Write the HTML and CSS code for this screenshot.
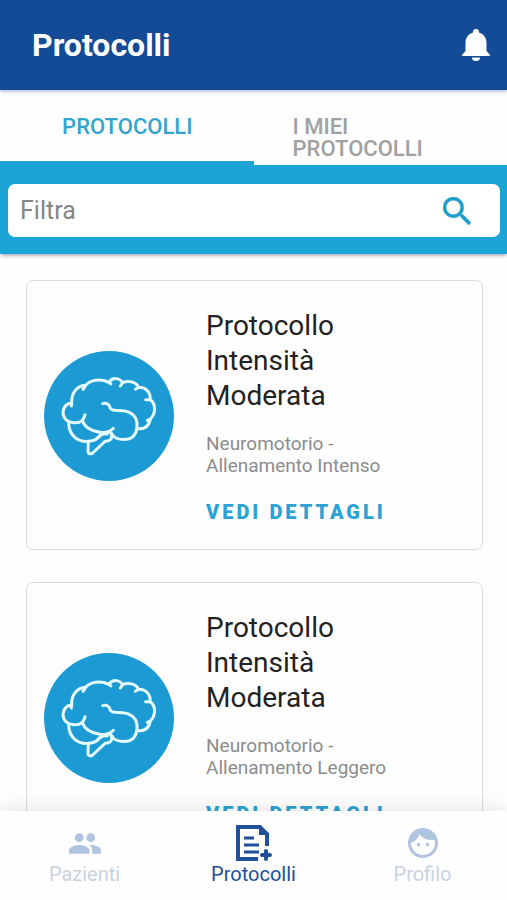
FILE: index.html
```html
<!DOCTYPE html>
<html lang="it">
<head>
  <meta charset="utf-8">
  <meta name="viewport" content="width=device-width, initial-scale=1">
  <title>Protocolli</title>
  <link rel="stylesheet" href="styles.css">
</head>
<body>
  <!-- Shared brain drawing used by the cards -->
  <svg class="sprite" aria-hidden="true">
    <symbol id="brain" viewBox="41 32 390 390">
      <circle cx="236" cy="227" r="195" fill="#1b9ad3"/>
      <g fill="none" stroke="#e4fbff" stroke-width="9" stroke-linecap="round" stroke-linejoin="round">
        <path d="M162 229C158 243 146 249 130 247C110 246 98 233 98 216C99 200 107 190 124 187C123 160 137 137 166 135C180 119 210 114 235 126C246 111 267 111 277 127C294 119 317 124 325 141C348 141 362 158 359 178C376 188 378 218 360 236C357 256 344 267 321 265"/>
        <path d="M124 187L123 197M166 135L158 147M235 126L242 131M277 127L270 137M325 141L315 147M359 178L346 178M360 236L351 240M162 229L164 223"/>
        <path d="M157 243C163 261 181 271 205 275C223 279 238 276 249 264"/>
        <path d="M217 190C230 186 239 194 239 202C242 212 256 210 275 211C305 212 322 231 320 258C318 284 305 297 283 297C264 298 250 292 245 281L239 276"/>
        <path d="M115 249C116 284 141 306 174 303C190 302 203 296 209 284"/>
        <path d="M174 304L173 334C173 340 181 343 187 338L224 303C238 303 246 296 244 284"/>
        <path d="M209 287C216 280 222 279 231 281"/>
      </g>
    </symbol>
  </svg>

  <div class="app">
    <header class="topbar">
      <h1>Protocolli</h1>
      <button class="icon-btn" type="button" aria-label="Notifiche">
        <svg viewBox="0 0 28 32" width="28" height="32" fill="#fff">
          <path d="M14 0a3 3 0 0 0-3 3v.5C6 5 3.500 9 3.500 14v8L0 26v1h28v-1l-3.500-4v-8c0-5-2.500-9-7.500-10.500V3a3 3 0 0 0-3-3zM10 28.500a4 3.500 0 0 0 8 0z"/>
        </svg>
      </button>
    </header>

    <nav class="tabs">
      <a class="tab active" href="#protocolli"><span>PROTOCOLLI</span></a>
      <a class="tab" href="#miei"><span>I MIEI PROTOCOLLI</span></a>
    </nav>

    <form class="search">
      <div class="search-box">
        <input type="text" placeholder="Filtra" aria-label="Filtra">
        <button class="icon-btn" type="button" aria-label="Cerca">
          <svg viewBox="3 3 17.500 17.500" width="28" height="28" fill="#1d9fcb" stroke="#1d9fcb" stroke-width=".3">
            <path d="M15.500 14h-.79l-.28-.27A6.471 6.471 0 0 0 16 9.500 6.500 6.500 0 1 0 9.500 16c1.610 0 3.090-.59 4.230-1.570l.27.28v.79l5 4.990L20.490 19l-4.990-5zm-6 0C7.010 14 5 11.990 5 9.500S7.010 5 9.500 5 14 7.010 14 9.500 11.990 14 9.500 14z"/>
          </svg>
        </button>
      </div>
    </form>

    <main class="list">
      <article class="card">
        <svg class="card-icon" aria-hidden="true"><use href="#brain"/></svg>
        <div class="card-body">
          <h2>Protocollo Intensità Moderata</h2>
          <p>Neuromotorio - Allenamento Intenso</p>
          <a class="details" href="#dettagli-1">VEDI DETTAGLI</a>
        </div>
      </article>
      <article class="card">
        <svg class="card-icon" aria-hidden="true"><use href="#brain"/></svg>
        <div class="card-body">
          <h2>Protocollo Intensità Moderata</h2>
          <p>Neuromotorio - Allenamento Leggero</p>
          <a class="details" href="#dettagli-2">VEDI DETTAGLI</a>
        </div>
      </article>
    </main>

    <nav class="bottom-nav">
      <a href="#pazienti">
        <span class="nav-icon">
          <svg viewBox="1 5 22 14" width="32" height="21" fill="currentColor">
            <path d="M16 11c1.660 0 2.990-1.340 2.990-3S17.660 5 16 5s-3 1.340-3 3 1.340 3 3 3zm-8 0c1.660 0 2.990-1.340 2.990-3S9.660 5 8 5 5 6.340 5 8s1.340 3 3 3zm0 2c-2.330 0-7 1.170-7 3.500V19h14v-2.500c0-2.330-4.670-3.500-7-3.500zm8 0c-.29 0-.62.020-.97.050 1.160.84 1.970 1.970 1.970 3.450V19h6v-2.500c0-2.330-4.670-3.500-7-3.500z"/>
          </svg>
        </span>
        <span>Pazienti</span>
      </a>
      <a class="current" href="#protocolli">
        <span class="nav-icon">
          <svg viewBox="0 0 36 36" width="36" height="36" fill="none" stroke="currentColor" stroke-width="4">
            <path d="M22 34H2V2h22l7 7v12"/>
            <path d="M23 1l9 9h-9z" fill="currentColor" stroke="none"/>
            <path d="M8 13h10M8 20h15M8 27h15" stroke-width="3"/>
            <path d="M30 26v8M26 30h8" stroke-linecap="round"/>
          </svg>
        </span>
        <span>Protocolli</span>
      </a>
      <a href="#profilo">
        <span class="nav-icon">
          <svg viewBox="2 2 20 20" width="30" height="30" fill="currentColor">
            <path d="M10.250 13a1.250 1.250 0 1 1-2.500 0 1.250 1.250 0 0 1 2.500 0zM15 11.750a1.250 1.250 0 1 0 0 2.500 1.250 1.250 0 0 0 0-2.500zM22 12c0 5.520-4.480 10-10 10S2 17.520 2 12 6.480 2 12 2s10 4.480 10 10zm-2 0c0-.78-.12-1.530-.33-2.240-.7.150-1.420.240-2.170.240a10 10 0 0 1-7.760-3.690A10.020 10.020 0 0 1 4 11.860V12c0 4.410 3.590 8 8 8s8-3.590 8-8z"/>
          </svg>
        </span>
        <span>Profilo</span>
      </a>
    </nav>
  </div>
</body>
</html>
```
FILE: styles.css
```css
* {
  box-sizing: border-box;
}

body {
  margin: 0;
  font-family: Roboto, "Liberation Sans", sans-serif;
  background: #fefefe;
  color: #222;
}

a {
  text-decoration: none;
}

.sprite {
  display: none;
}

.app {
  height: 100vh;
  display: flex;
  flex-direction: column;
  overflow: hidden;
}

/* Header */
.topbar {
  display: flex;
  align-items: center;
  justify-content: space-between;
  flex-shrink: 0;
  height: 90px;
  padding: 0 17px 0 32px;
  background: #134b97;
  color: #fff;
  box-shadow: 0 1px 4px rgba(20, 40, 120, 0.4);
  z-index: 1;
}

.topbar h1 {
  margin: 0;
  font-size: 32px;
  font-weight: 700;
}

.icon-btn {
  display: flex;
  padding: 0;
  border: none;
  background: none;
  cursor: pointer;
}

/* Tabs */
.tabs {
  display: flex;
  flex-shrink: 0;
}

.tab {
  flex: 1;
  display: flex;
  justify-content: center;
  padding: 26px 38px 5px 39px;
  font-size: 22px;
  line-height: 22px;
  font-weight: 500;
  color: #a0a0a0;
}

.tab.active {
  padding-bottom: 1px;
  border-bottom: 4px solid #1ca4d6;
  color: #32a5cd;
}

/* Search */
.search {
  flex-shrink: 0;
  padding: 19px 7px 17px 8px;
  background: #1ca4d6;
  box-shadow: 0 3px 3px -1px rgba(0, 0, 60, 0.3);
  z-index: 1;
}

.search-box {
  display: flex;
  align-items: center;
  height: 53px;
  padding: 0 29px 0 12px;
  border-radius: 7px;
  background: #fff;
}

.search-box input {
  flex: 1;
  min-width: 0;
  padding: 0;
  border: none;
  outline: none;
  background: none;
  font-family: inherit;
  font-size: 25px;
  color: #333;
}

.search-box input::placeholder {
  color: #858585;
}

/* Cards */
.list {
  flex: 1;
  min-height: 0;
  display: flex;
  flex-direction: column;
  gap: 32px;
  padding: 26px 24px 32px 26px;
  overflow-y: auto;
  scrollbar-width: none;
}

.card {
  display: flex;
  flex-shrink: 0;
  align-items: center;
  gap: 32px;
  padding: 27px 64px 26px 17px;
  border: 1px solid #dcdcdc;
  border-radius: 7px;
}

.card-icon {
  flex-shrink: 0;
  width: 130px;
  height: 130px;
}

.card-body {
  flex: 1;
}

.card h2 {
  max-width: 180px;
  margin: 0;
  font-size: 28px;
  line-height: 35px;
  font-weight: 400;
}

.card p {
  max-width: 190px;
  margin: 20px 0 24px;
  font-size: 19px;
  line-height: 22px;
  color: #8c8c8c;
}

.details {
  display: block;
  font-size: 20px;
  line-height: 22px;
  font-weight: 900;
  letter-spacing: 3px;
  white-space: nowrap;
  color: #2ba3d4;
}

/* Bottom navigation */
.bottom-nav {
  display: flex;
  flex-shrink: 0;
  height: 89px;
  padding-top: 14px;
  background: #fefefe;
  box-shadow: 0 0 20px rgba(0, 0, 0, 0.12);
  z-index: 1;
}

.bottom-nav a {
  flex: 1;
  display: flex;
  flex-direction: column;
  align-items: center;
  font-size: 20px;
  line-height: 26px;
  color: #c9d3de;
}

.nav-icon {
  display: flex;
  align-items: center;
  height: 36px;
  color: #b0c4df;
}

.bottom-nav .current,
.current .nav-icon {
  color: #214f99;
}
```
